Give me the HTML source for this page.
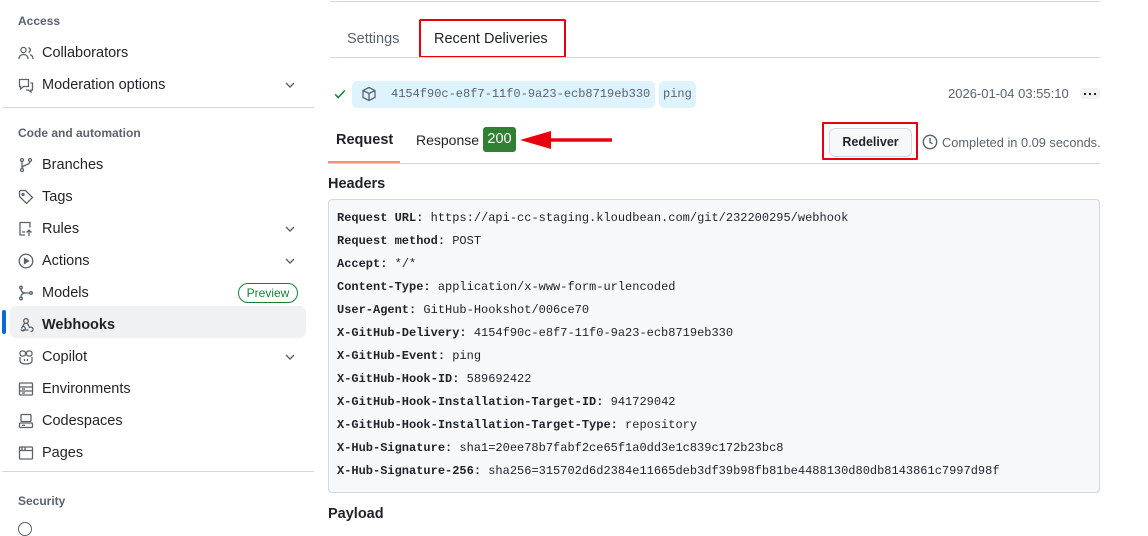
<!DOCTYPE html>
<html><head><meta charset="utf-8"><style>
*{box-sizing:border-box;margin:0;padding:0}
body{width:1148px;height:528px;overflow:hidden;background:#fff;font-family:"Liberation Sans",sans-serif;color:#1f2328;position:relative}
.a{position:absolute;white-space:nowrap}
.h{font-size:12px;font-weight:bold;color:#59636e}
.it{font-size:14.5px;color:#1f2328}
.ic{position:absolute;width:16px;height:16px}
.chev{position:absolute;left:282px;width:16px;height:16px}
.hr{position:absolute;height:1px;background:#d1d9e0}
.mono{font-family:"Liberation Mono",monospace;font-size:12px}
.code b{font-weight:bold}
</style></head><body>
<!-- sidebar -->
<div class="a h" style="left:18px;top:14px">Access</div>
<svg class="ic" style="left:18px;top:45px" viewBox="0 0 16 16" fill="none" stroke="#59636e" stroke-width="1.3"><circle cx="5.5" cy="5" r="2.6"/><path d="M1 14c0-3 2-4.5 4.5-4.5S10 11 10 14M10.5 2.6a2.5 2.5 0 010 4.8M12 9.8c1.8.5 3 2 3 4.2"/></svg>
<div class="a it" style="left:42px;top:45px">Collaborators</div>
<svg class="ic" style="left:18px;top:77px" viewBox="0 0 16 16" fill="none" stroke="#59636e" stroke-width="1.3"><path d="M1.5 2.5h9v7h-5l-3 2.5v-2.5h-1zM12.5 6h2v7h-1.5v2l-2.5-2H8"/></svg>
<div class="a it" style="left:42px;top:77px">Moderation options</div>
<svg class="chev" style="top:77px" viewBox="0 0 16 16" fill="none" stroke="#59636e" stroke-width="1.4"><path d="M4 6l4 4 4-4"/></svg>
<div class="hr" style="left:2px;top:107px;width:312px"></div>
<div class="a h" style="left:18px;top:126px">Code and automation</div>
<svg class="ic" style="left:18px;top:157px" viewBox="0 0 16 16" fill="none" stroke="#59636e" stroke-width="1.3"><circle cx="4" cy="3" r="1.5"/><circle cx="4" cy="13" r="1.5"/><circle cx="12" cy="3" r="1.5"/><path d="M4 4.5v7M12 4.5c0 4-8 3-8 7"/></svg>
<div class="a it" style="left:42px;top:157px">Branches</div>
<svg class="ic" style="left:18px;top:189px" viewBox="0 0 16 16" fill="none" stroke="#59636e" stroke-width="1.3"><path d="M1.5 2.5v5l7 7 6-6-7-7h-5z"/><circle cx="5" cy="5.5" r="1"/></svg>
<div class="a it" style="left:42px;top:189px">Tags</div>
<svg class="ic" style="left:18px;top:221px" viewBox="0 0 16 16" fill="none" stroke="#59636e" stroke-width="1.3"><path d="M7 14H2V1.5h10v5M4 11h3M11 15V9M8.5 11.5L11 9l2.5 2.5"/></svg>
<div class="a it" style="left:42px;top:221px">Rules</div>
<svg class="chev" style="top:221px" viewBox="0 0 16 16" fill="none" stroke="#59636e" stroke-width="1.4"><path d="M4 6l4 4 4-4"/></svg>
<svg class="ic" style="left:18px;top:253px" viewBox="0 0 16 16" fill="none" stroke="#59636e" stroke-width="1.3"><circle cx="8" cy="8" r="6.8"/><path d="M6.5 5.5v5l4-2.5z" fill="#59636e"/></svg>
<div class="a it" style="left:42px;top:253px">Actions</div>
<svg class="chev" style="top:253px" viewBox="0 0 16 16" fill="none" stroke="#59636e" stroke-width="1.4"><path d="M4 6l4 4 4-4"/></svg>
<svg class="ic" style="left:18px;top:285px" viewBox="0 0 16 16" fill="none" stroke="#59636e" stroke-width="1.3"><circle cx="3" cy="2.5" r="1.3"/><circle cx="3" cy="13.5" r="1.3"/><circle cx="13" cy="8" r="1.3"/><path d="M3 4c0 3 2 4 5 4h3.5M3 12c0-3 2-4 5-4"/></svg>
<div class="a it" style="left:42px;top:285px">Models</div>
<div class="a" style="left:238px;top:283px;width:60px;height:20px;border:1px solid #1a7f37;border-radius:10px;color:#1a7f37;font-size:12px;line-height:18px;text-align:center">Preview</div>
<div class="a" style="left:10px;top:306px;width:296px;height:32px;background:#eff1f3;border-radius:6px"></div>
<div class="a" style="left:2px;top:310px;width:4px;height:24px;background:#0969da;border-radius:2px"></div>
<svg class="ic" style="left:18px;top:317px" viewBox="0 0 16 16" fill="none" stroke="#59636e" stroke-width="1.3"><circle cx="8" cy="4" r="2.3"/><path d="M6.7 6L3.5 11.5M3 12.5a2.2 2.2 0 101.5-3M9.3 6l2.5 5M5 13h5.5M12.5 14.5a2.2 2.2 0 10-.3-4.3"/></svg>
<div class="a it" style="left:42px;top:317px;font-weight:bold">Webhooks</div>
<svg class="ic" style="left:18px;top:349px" viewBox="0 0 16 16" fill="none" stroke="#59636e" stroke-width="1.3"><path d="M2 8v4c0 2 3 3 6 3s6-1 6-3V8"/><rect x="2" y="2" width="5.5" height="5" rx="2"/><rect x="8.5" y="2" width="5.5" height="5" rx="2"/><path d="M6.5 10v2M9.5 10v2"/></svg>
<div class="a it" style="left:42px;top:349px">Copilot</div>
<svg class="chev" style="top:349px" viewBox="0 0 16 16" fill="none" stroke="#59636e" stroke-width="1.4"><path d="M4 6l4 4 4-4"/></svg>
<svg class="ic" style="left:18px;top:381px" viewBox="0 0 16 16" fill="none" stroke="#59636e" stroke-width="1.3"><rect x="1.5" y="2" width="13" height="12" rx="1"/><path d="M1.5 6h13M1.5 10h13M4 8h3M4 12h3"/></svg>
<div class="a it" style="left:42px;top:381px">Environments</div>
<svg class="ic" style="left:18px;top:413px" viewBox="0 0 16 16" fill="none" stroke="#59636e" stroke-width="1.3"><rect x="3" y="1.5" width="10" height="7" rx="1"/><rect x="1.5" y="10" width="13" height="4.5" rx="1"/><path d="M4 12.3h3"/></svg>
<div class="a it" style="left:42px;top:413px">Codespaces</div>
<svg class="ic" style="left:18px;top:445px" viewBox="0 0 16 16" fill="none" stroke="#59636e" stroke-width="1.3"><rect x="1.5" y="2" width="13" height="12" rx="1"/><path d="M1.5 5.5h13M4 2v3.5M7 2v3.5"/></svg>
<div class="a it" style="left:42px;top:445px">Pages</div>
<div class="hr" style="left:2px;top:471px;width:312px"></div>
<div class="a h" style="left:18px;top:494px">Security</div>
<div class="a" style="left:18px;top:522px;width:14px;height:14px;border:1.3px solid #59636e;border-radius:50%"></div>
<!-- main -->
<div class="hr" style="left:330px;top:1px;width:770px"></div>
<div class="a" style="left:347px;top:31px;font-size:14.5px;color:#59636e">Settings</div>
<div class="a" style="left:434px;top:31px;font-size:14.5px">Recent Deliveries</div>
<div class="a" style="left:419px;top:19px;width:147px;height:39px;border:2px solid #e8000f;border-radius:2px"></div>
<div class="hr" style="left:330px;top:57px;width:770px"></div>
<svg class="a" style="left:333px;top:87px" width="14" height="14" viewBox="0 0 16 16" fill="none" stroke="#1a7f37" stroke-width="1.8"><path d="M2.5 8.5l3.5 3.5 7.5-8"/></svg>
<div class="a" style="left:352px;top:81px;width:303px;height:27px;background:#ddf4ff;border-radius:5px"></div>
<svg class="a" style="left:361px;top:86px" width="16" height="16" viewBox="0 0 16 16" fill="none" stroke="#59636e" stroke-width="1.3"><path d="M8 1.5l6 3v7l-6 3-6-3v-7zM2 4.5l6 3 6-3M8 7.5v7"/></svg>
<div class="a mono" style="left:391px;top:87px;color:#59636e">4154f90c-e8f7-11f0-9a23-ecb8719eb330</div>
<div class="a" style="left:659px;top:81px;width:37px;height:27px;background:#ddf4ff;border-radius:5px"></div>
<div class="a mono" style="left:663px;top:87px;color:#59636e">ping</div>
<div class="a" style="left:948px;top:86px;font-size:13px;color:#59636e">2026-01-04 03:55:10</div>
<div class="a" style="left:1080px;top:88px;width:20px;height:11px;background:#eff1f3;border-radius:3px"></div>
<div class="a" style="left:1084px;top:93px;width:2px;height:2px;background:#1f2328;box-shadow:5px 0 #1f2328,10px 0 #1f2328"></div>
<div class="a" style="left:336px;top:132px;font-size:14.5px;font-weight:bold">Request</div>
<div class="a" style="left:328px;top:161px;width:72px;height:2px;background:#fd8c73"></div>
<div class="a" style="left:416px;top:132px;font-size:14px">Response</div>
<div class="a" style="left:483px;top:127px;width:33px;height:25px;background:#2f8033;border-radius:3px;color:#fff;font-size:14.5px;line-height:25px;text-align:center">200</div>
<svg class="a" style="left:518px;top:128px" width="94" height="24"><path d="M32 12h75" stroke="#e8000f" stroke-width="3.5" stroke-linecap="round"/><path d="M2 12L33 3v18z" fill="#e8000f"/></svg>
<div class="a" style="left:829px;top:128px;width:83px;height:29px;background:#f6f8fa;border:1px solid #d1d9e0;border-radius:6px;font-size:12.5px;line-height:27px;text-align:center;font-weight:bold;color:#1f2328">Redeliver</div>
<div class="a" style="left:822px;top:122px;width:96px;height:38px;border:2px solid #e8000f;border-radius:1px"></div>
<svg class="a" style="left:922px;top:134px" width="16" height="16" viewBox="0 0 16 16" fill="none" stroke="#59636e" stroke-width="1.4"><circle cx="8" cy="8" r="6.7"/><path d="M8 4v4.3l2.5 1.5"/></svg>
<div class="a" style="left:942px;top:135px;font-size:12.8px;color:#59636e">Completed in 0.09 seconds.</div>
<div class="hr" style="left:328px;top:163px;width:772px"></div>
<div class="a" style="left:328px;top:176px;font-size:14.5px;font-weight:bold">Headers</div>
<div class="a" style="left:328px;top:199px;width:772px;height:294px;background:#f6f8fa;border:1px solid #d1d9e0;border-radius:4px"></div>
<div class="a mono code" style="left:337px;top:207px;line-height:23px;color:#1f2328">
<b>Request URL:</b> https://api-cc-staging.kloudbean.com/git/232200295/webhook<br>
<b>Request method:</b> POST<br>
<b>Accept:</b> */*<br>
<b>Content-Type:</b> application/x-www-form-urlencoded<br>
<b>User-Agent:</b> GitHub-Hookshot/006ce70<br>
<b>X-GitHub-Delivery:</b> 4154f90c-e8f7-11f0-9a23-ecb8719eb330<br>
<b>X-GitHub-Event:</b> ping<br>
<b>X-GitHub-Hook-ID:</b> 589692422<br>
<b>X-GitHub-Hook-Installation-Target-ID:</b> 941729042<br>
<b>X-GitHub-Hook-Installation-Target-Type:</b> repository<br>
<b>X-Hub-Signature:</b> sha1=20ee78b7fabf2ce65f1a0dd3e1c839c172b23bc8<br>
<b>X-Hub-Signature-256:</b> sha256=315702d6d2384e11665deb3df39b98fb81be4488130d80db8143861c7997d98f
</div>
<div class="a" style="left:328px;top:506px;font-size:14.5px;font-weight:bold">Payload</div>
</body></html>
